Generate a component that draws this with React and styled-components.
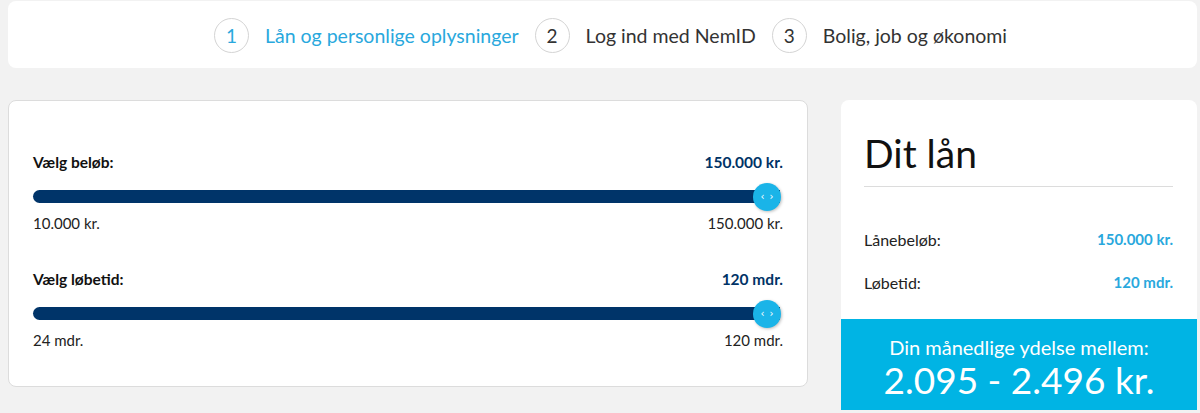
import styled, {createGlobalStyle} from 'styled-components';

const GlobalStyle = createGlobalStyle`
	body {
		margin: 0;
		background: #f2f2f2;
		font-family: Lato, 'Noto Sans', sans-serif;
		color: #222;
	}
`;

const Page = styled.div`
	width: 1200px;
	height: 413px;
	overflow: hidden;
	padding: 1px 3px 0 8px;
	box-sizing: border-box;
`;

const StepBar = styled.div`
	height: 67px;
	background: #fff;
	border-radius: 8px;
	display: flex;
	align-items: center;
	justify-content: center;
	gap: 16px;
	padding: 1px 0 0 16px;
	box-sizing: border-box;
`;

const Step = styled.div`
	display: flex;
	align-items: center;
	gap: 16px;
	font-size: 19.5px;
	color: ${props => (props.active ? '#29a8dd' : '#333')};
`;

const StepNum = styled.span`
	width: 33px;
	height: 33px;
	border: 1px solid #d4d4d4;
	border-radius: 50%;
	display: flex;
	align-items: center;
	justify-content: center;
	font-size: 19px;
`;

const Main = styled.div`
	display: flex;
	gap: 33px;
	margin-top: 32px;
	align-items: flex-start;
`;

const SliderCard = styled.div`
	width: 800px;
	height: 287px;
	box-sizing: border-box;
	background: #fff;
	border: 1px solid #dcdcdc;
	border-radius: 8px;
	padding: 52px 24px 0 24px;
`;

const SliderBlock = styled.div`
	margin-bottom: 38px;
`;

const LabelRow = styled.div`
	display: flex;
	justify-content: space-between;
	font-size: 15.5px;
	font-weight: 700;
	color: #111;
`;

const Value = styled.span`
	color: #003366;
`;

const Track = styled.div`
	position: relative;
	height: 13px;
	margin: 19px 3px 11px 0;
	background: #003469;
	border-radius: 7px 0 0 7px;
`;

const Thumb = styled.div`
	position: absolute;
	right: -1px;
	top: 50%;
	width: 28px;
	height: 28px;
	margin-top: -14px;
	border-radius: 50%;
	background: #1ab4e8;
	box-shadow: 1px 1px 3px rgba(0, 0, 0, 0.25);
	color: #fff;
	font-size: 10px;
	display: flex;
	align-items: center;
	justify-content: center;
	gap: 5px;
	font-family: 'DejaVu Sans', sans-serif;
`;

const RangeRow = styled.div`
	display: flex;
	justify-content: space-between;
	font-size: 15px;
	color: #222;
`;

const LoanCard = styled.div`
	width: 356px;
	height: 310px;
	background: #fff;
	border-radius: 8px 8px 0 0;
	display: flex;
	flex-direction: column;
	overflow: hidden;
`;

const LoanBody = styled.div`
	padding: 30px 24px 0 23px;
	flex: 1;
`;

const Title = styled.h1`
	margin: 0;
	font-size: 39px;
	font-weight: 400;
	color: #111;
	line-height: 46px;
	padding-bottom: 10px;
	border-bottom: 1px solid #dcdcdc;
`;

const InfoRow = styled.div`
	display: flex;
	justify-content: space-between;
	font-size: 16px;
	color: #222;
	margin-top: ${props => (props.first ? '43px' : '24px')};
`;

const InfoValue = styled.span`
	color: #29a8dd;
	font-weight: 700;
	font-size: 15px;
`;

const Payment = styled.div`
	height: 91px;
	background: #00b4e4;
	color: #fff;
	text-align: center;
	padding-top: 17px;
	box-sizing: border-box;
`;

const PaymentLabel = styled.div`
	font-size: 20px;
	line-height: 22px;
`;

const PaymentAmount = styled.div`
	font-size: 37px;
	line-height: 44px;
`;

function Slider({label, value, min, max}) {
	return (
		<SliderBlock>
			<LabelRow>
				<span>{label}</span>
				<Value>{value}</Value>
			</LabelRow>
			<Track>
				<Thumb>
					<span>‹</span>
					<span>›</span>
				</Thumb>
			</Track>
			<RangeRow>
				<span>{min}</span>
				<span>{max}</span>
			</RangeRow>
		</SliderBlock>
	);
}

export default function App() {
	return (
		<Page>
			<GlobalStyle />
			<StepBar>
				<Step active>
					<StepNum>1</StepNum>Lån og personlige oplysninger
				</Step>
				<Step>
					<StepNum>2</StepNum>Log ind med NemID
				</Step>
				<Step>
					<StepNum>3</StepNum>Bolig, job og økonomi
				</Step>
			</StepBar>
			<Main>
				<SliderCard>
					<Slider label="Vælg beløb:" value="150.000 kr." min="10.000 kr." max="150.000 kr." />
					<Slider label="Vælg løbetid:" value="120 mdr." min="24 mdr." max="120 mdr." />
				</SliderCard>
				<LoanCard>
					<LoanBody>
						<Title>Dit lån</Title>
						<InfoRow first>
							<span>Lånebeløb:</span>
							<InfoValue>150.000 kr.</InfoValue>
						</InfoRow>
						<InfoRow>
							<span>Løbetid:</span>
							<InfoValue>120 mdr.</InfoValue>
						</InfoRow>
					</LoanBody>
					<Payment>
						<PaymentLabel>Din månedlige ydelse mellem:</PaymentLabel>
						<PaymentAmount>2.095 - 2.496 kr.</PaymentAmount>
					</Payment>
				</LoanCard>
			</Main>
		</Page>
	);
}
